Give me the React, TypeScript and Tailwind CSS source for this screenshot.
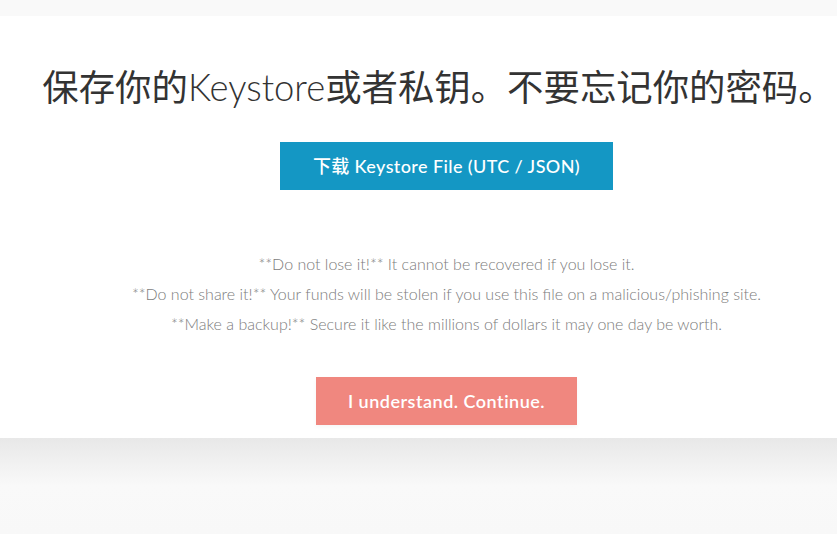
export default function App() {
  return (
    <div className="w-[837px] h-[544px] overflow-hidden bg-white font-['Lato','Noto_Sans_CJK_SC',sans-serif]">
      <div className="h-[16px] bg-[#f9f9f9]" />
      <section className="h-[422px] bg-white flex flex-col items-center">
        <div className="w-full flex justify-center pl-[40px]">
          <h1 className="mt-[48px] whitespace-nowrap text-[36.4px] leading-[46px] font-normal text-[#333]">
            保存你的<span className="font-light">Keystore</span>或者私钥。不要忘记你的密码。
          </h1>
        </div>
        <div className="w-full flex flex-col items-center pl-[56px]">
          <button className="mt-[32px] w-[333px] h-[48px] bg-[#1497c4] text-white text-[18px] font-medium tracking-[0.4px]">
            下载 Keystore File (UTC / JSON)
          </button>
          <div className="mt-[59px] flex flex-col items-center text-[16px] leading-[30px] font-light text-[#7c7c7c]">
            <p>**Do not lose it!** It cannot be recovered if you lose it.</p>
            <p>**Do not share it!** Your funds will be stolen if you use this file on a malicious/phishing site.</p>
            <p>**Make a backup!** Secure it like the millions of dollars it may one day be worth.</p>
          </div>
          <button className="mt-[38px] w-[261px] h-[48px] bg-[#f0877f] text-white text-[18px] font-semibold tracking-[0.5px] shadow-[0_2px_4px_rgba(0,0,0,0.04)]">
            I understand. Continue.
          </button>
        </div>
      </section>
      <div className="h-[96px] bg-gradient-to-b from-[#e8e8e8] via-[#f9f9f9] to-[#f8f8f8]" />
    </div>
  );
}
